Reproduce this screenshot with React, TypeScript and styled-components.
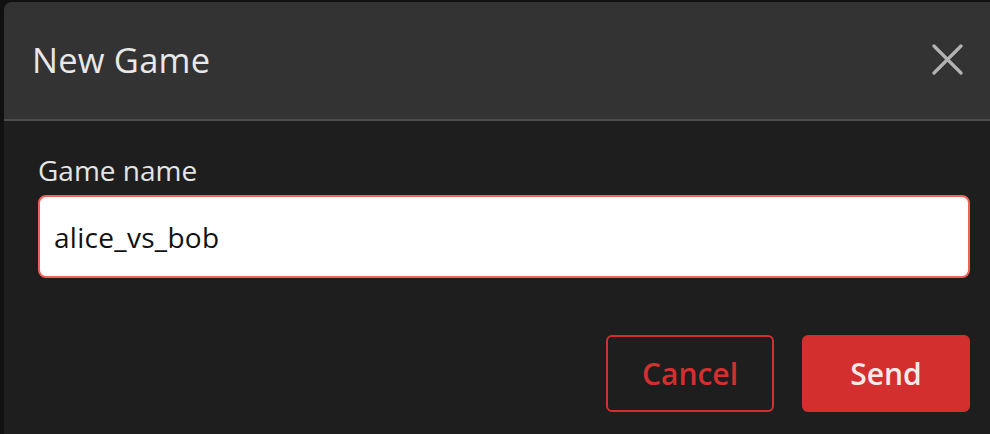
import React from "react";
import styled, { createGlobalStyle } from "styled-components";

const Global = createGlobalStyle`
  html, body { margin: 0; padding: 0; background: #111111; overflow: hidden; }
  body { font-family: "Open Sans", "Lato", sans-serif; }
  * { box-sizing: border-box; }
`;

const Page = styled.div`
  width: 990px;
  height: 434px;
  overflow: hidden;
  padding: 2px 0 0 4px;
  background: #111111;
`;

const Dialog = styled.div`
  width: 1000px;
  height: 460px;
  background: #1e1e1e;
  border-radius: 8px;
  overflow: hidden;
  display: flex;
  flex-direction: column;
`;

const Header = styled.div`
  height: 119px;
  background: #333333;
  border-bottom: 2px solid #4c4c4c;
  display: flex;
  align-items: center;
  justify-content: space-between;
  padding: 0 41px 2px 28px;
`;

const Title = styled.h2`
  margin: 0;
  font-size: 34.5px;
  line-height: 40px;
  font-weight: 500;
  letter-spacing: 0.2px;
  color: #e8e8e8;
`;

const CloseButton = styled.button`
  background: none;
  border: none;
  padding: 0;
  width: 31px;
  height: 31px;
  display: flex;
  cursor: pointer;
`;

const Body = styled.div`
  padding: 32px 34px 0 34px;
  display: flex;
  flex-direction: column;
`;

const Label = styled.label`
  font-size: 28px;
  color: #e4e4e4;
  line-height: 34px;
  margin-bottom: 8px;
`;

const Input = styled.input`
  height: 83px;
  border: 2px solid #f2605a;
  border-radius: 8px;
  background: #ffffff;
  padding: 0 14px;
  font-family: inherit;
  font-size: 28px;
  letter-spacing: 0.3px;
  color: #111111;
  outline: none;
`;

const Footer = styled.div`
  margin-top: 57px;
  display: flex;
  justify-content: flex-end;
  gap: 28px;
`;

const Button = styled.button<{ $variant: "outline" | "solid" }>`
  width: 168px;
  height: 77px;
  border-radius: 6px;
  font-family: inherit;
  font-size: 30px;
  font-weight: 600;
  cursor: pointer;
  border: 2px solid #d32f2f;
  background: ${(p) => (p.$variant === "solid" ? "#d32f2f" : "transparent")};
  color: ${(p) => (p.$variant === "solid" ? "#fbe9e9" : "#d32f2f")};
`;

export default function App() {
  return (
    <>
      <Global />
      <Page>
        <Dialog>
          <Header>
            <Title>New Game</Title>
            <CloseButton aria-label="Close">
              <svg width="31" height="31" viewBox="0 0 31 31">
                <path
                  d="M2 2 L29 29 M29 2 L2 29"
                  stroke="#b3b3b3"
                  strokeWidth="3.2"
                  strokeLinecap="round"
                />
              </svg>
            </CloseButton>
          </Header>
          <Body>
            <Label>Game name</Label>
            <Input defaultValue="alice_vs_bob" />
            <Footer>
              <Button $variant="outline">Cancel</Button>
              <Button $variant="solid">Send</Button>
            </Footer>
          </Body>
        </Dialog>
      </Page>
    </>
  );
}
